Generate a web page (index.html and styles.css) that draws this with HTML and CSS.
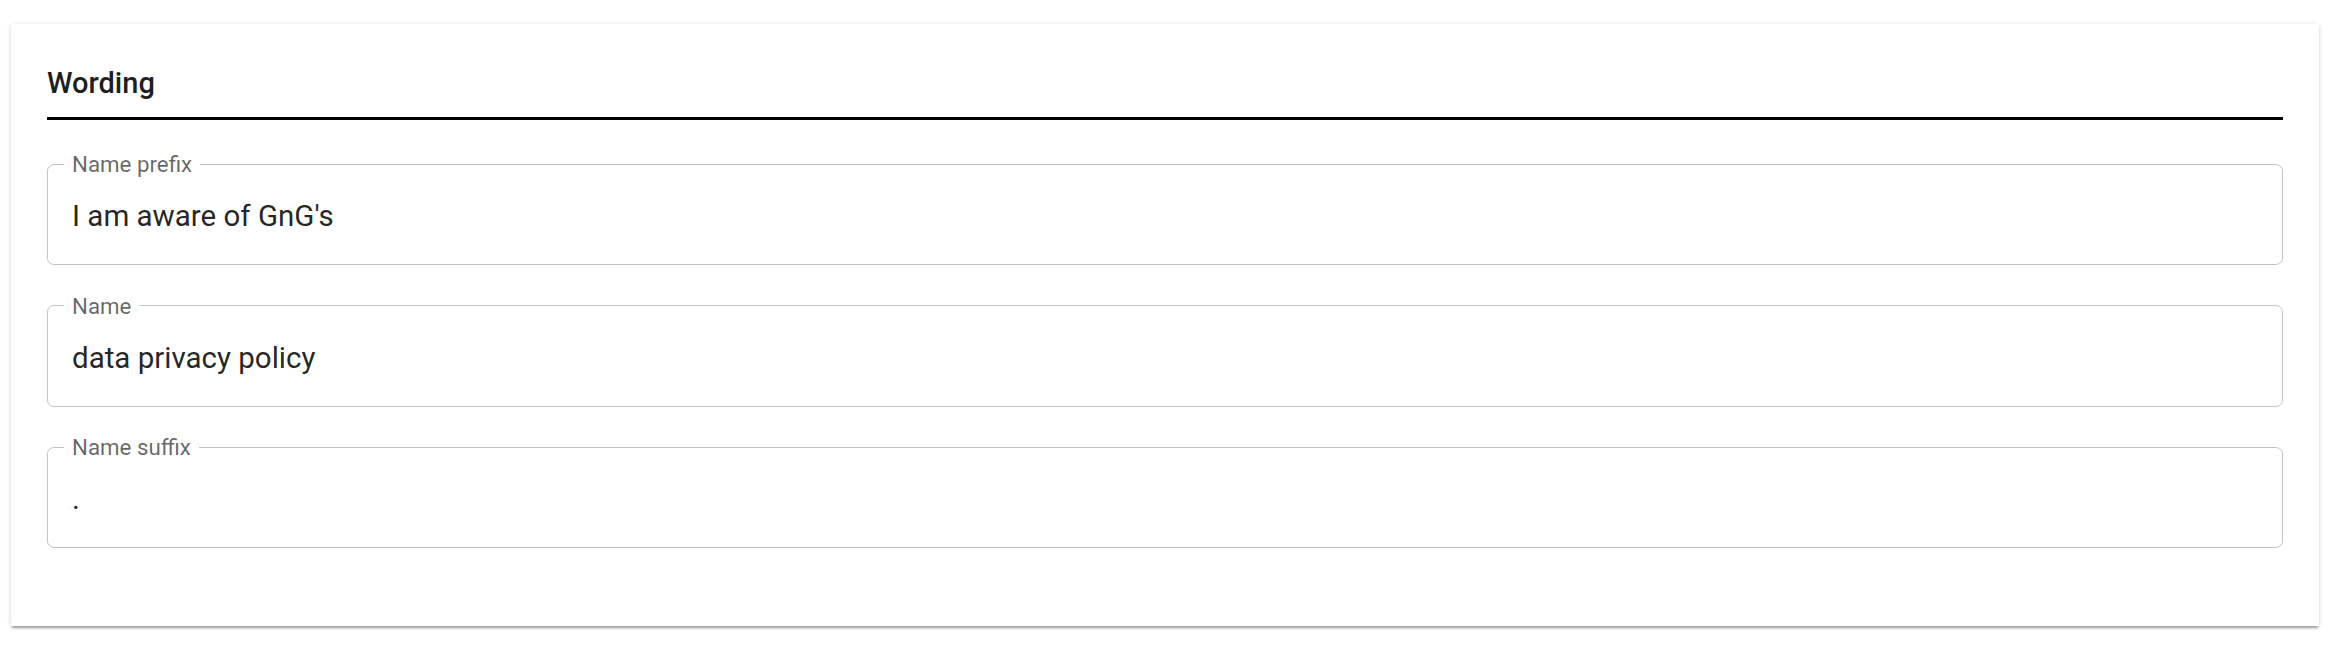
FILE: index.html
```html
<!DOCTYPE html>
<html lang="en">
<head>
<meta charset="utf-8">
<title>Wording</title>
<link rel="stylesheet" href="styles.css">
</head>
<body>
<div class="page">
  <section class="card">
    <h2 class="card-title">Wording</h2>
    <div class="fields">
      <fieldset class="field">
        <legend class="field-label">Name prefix</legend>
        <div class="field-value">I am aware of GnG's</div>
      </fieldset>
      <fieldset class="field">
        <legend class="field-label">Name</legend>
        <div class="field-value">data privacy policy</div>
      </fieldset>
      <fieldset class="field">
        <legend class="field-label">Name suffix</legend>
        <div class="field-value">.</div>
      </fieldset>
    </div>
  </section>
</div>
</body>
</html>
```
FILE: styles.css
```css
html, body {
  margin: 0;
  padding: 0;
  background: #ffffff;
}

body {
  font-family: Roboto, "Liberation Sans", Arial, sans-serif;
  color: rgba(0, 0, 0, 0.87);
}

.page {
  padding: 24px 23px 31px 11px;
}

.card {
  background: #ffffff;
  padding: 42px 36px 78px 36px;
  box-shadow: 0 3px 2px -1px rgba(0, 0, 0, 0.3),
              0 2px 4px 0 rgba(0, 0, 0, 0.1),
              0 0 5px 0 rgba(0, 0, 0, 0.07);
}

.card-title {
  margin: 0;
  font-size: 29px;
  line-height: 34px;
  font-weight: 500;
  color: #1f1f1f;
  padding-bottom: 17px;
  border-bottom: 3px solid #000000;
}

.fields {
  display: flex;
  flex-direction: column;
  gap: 28.5px;
  padding-top: 32px;
}

.field {
  margin: 0;
  min-width: 0;
  border: 1px solid #c4c4c4;
  border-radius: 7px;
  padding: 0 16px 31px 16px;
}

.field-label {
  padding: 0 8px;
  font-size: 22.3px;
  line-height: 24px;
  color: rgba(0, 0, 0, 0.6);
}

.field-value {
  padding: 23px 0 0 8px;
  font-size: 29.5px;
  line-height: 34px;
  color: rgba(0, 0, 0, 0.87);
}
```
